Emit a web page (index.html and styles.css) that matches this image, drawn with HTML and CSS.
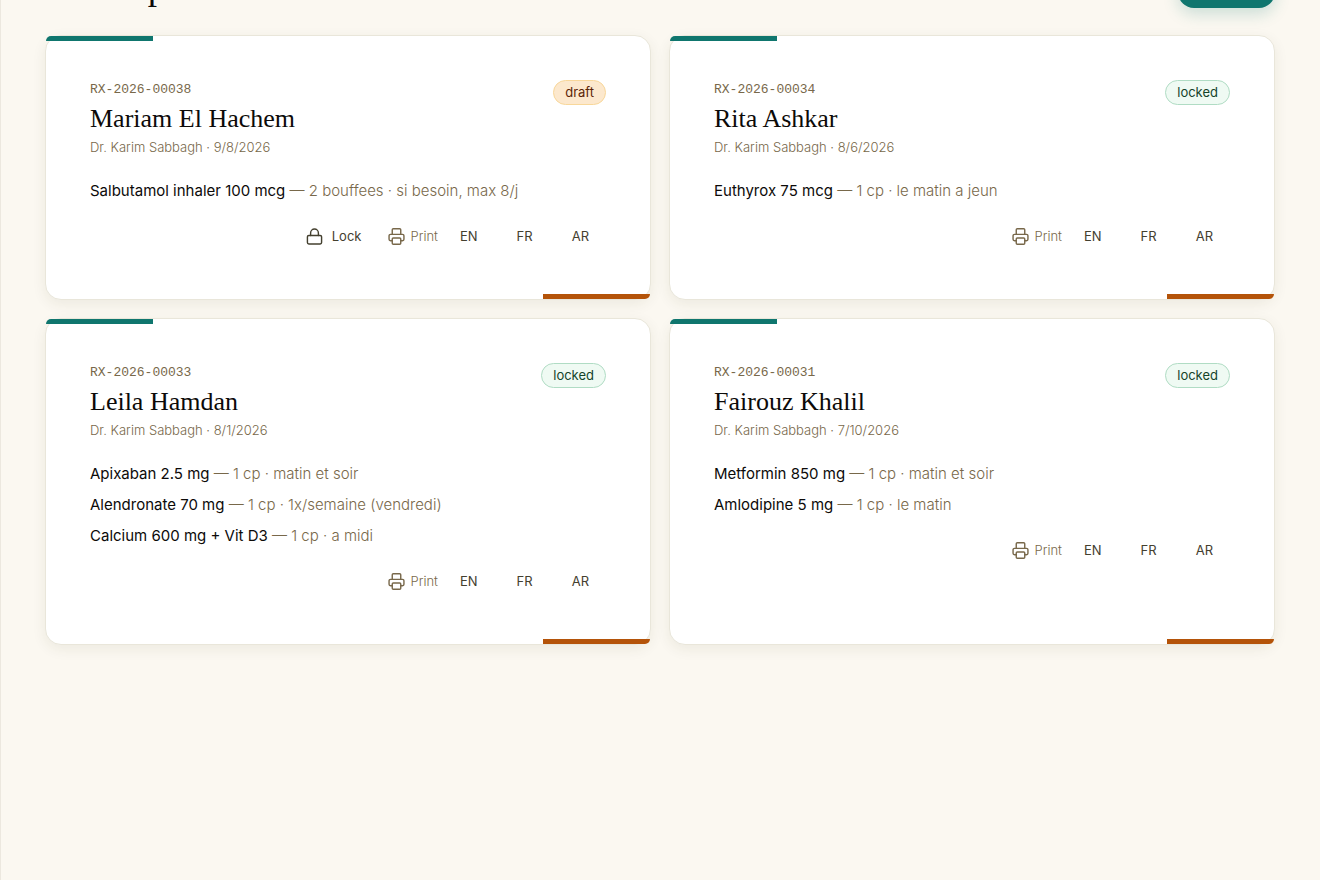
FILE: index.html
```html
<!DOCTYPE html>
<html lang="en">
<head>
    <meta charset="UTF-8">
    <meta name="viewport" content="width=device-width, initial-scale=1.0">
    <title>Prescriptions</title>
    <link rel="stylesheet" href="styles.css">
</head>
<body>
    <svg class="sprite" aria-hidden="true">
        <symbol id="icon-lock" viewBox="0 0 24 24">
            <rect x="2" y="10.5" width="20" height="12" rx="2"/>
            <path d="M6.5 10.5V7a5.5 5.5 0 0 1 11 0v3.5"/>
        </symbol>
        <symbol id="icon-print" viewBox="0 0 24 24">
            <path d="M6 9V2.5A1.5 1.5 0 0 1 7.5 1h9A1.5 1.5 0 0 1 18 2.5V9"/>
            <path d="M6 18H3.5a2 2 0 0 1-2-2v-5a2 2 0 0 1 2-2h17a2 2 0 0 1 2 2v5a2 2 0 0 1-2 2H18"/>
            <rect x="6" y="14" width="12" height="9" rx="1.5"/>
        </symbol>
    </svg>

    <main class="page">
        <header class="page-header">
            <h1>Prescriptions</h1>
            <button class="btn-new" type="button">New</button>
        </header>

        <div class="grid">
            <article class="card">
                <div class="card-head">
                    <div>
                        <div class="number">RX-2026-00038</div>
                        <h2>Mariam El Hachem</h2>
                        <p class="meta">Dr. Karim Sabbagh · 9/8/2026</p>
                    </div>
                    <span class="badge draft">draft</span>
                </div>
                <ul class="items">
                    <li><strong>Salbutamol inhaler 100 mcg</strong> — 2 bouffees · si besoin, max 8/j</li>
                </ul>
                <div class="actions">
                    <button type="button"><svg><use href="#icon-lock"/></svg>Lock</button>
                    <span class="print"><svg><use href="#icon-print"/></svg>Print</span>
                    <button type="button">EN</button>
                    <button type="button">FR</button>
                    <button type="button">AR</button>
                </div>
            </article>

            <article class="card">
                <div class="card-head">
                    <div>
                        <div class="number">RX-2026-00034</div>
                        <h2>Rita Ashkar</h2>
                        <p class="meta">Dr. Karim Sabbagh · 8/6/2026</p>
                    </div>
                    <span class="badge locked">locked</span>
                </div>
                <ul class="items">
                    <li><strong>Euthyrox 75 mcg</strong> — 1 cp · le matin a jeun</li>
                </ul>
                <div class="actions">
                    <span class="print"><svg><use href="#icon-print"/></svg>Print</span>
                    <button type="button">EN</button>
                    <button type="button">FR</button>
                    <button type="button">AR</button>
                </div>
            </article>

            <article class="card">
                <div class="card-head">
                    <div>
                        <div class="number">RX-2026-00033</div>
                        <h2>Leila Hamdan</h2>
                        <p class="meta">Dr. Karim Sabbagh · 8/1/2026</p>
                    </div>
                    <span class="badge locked">locked</span>
                </div>
                <ul class="items">
                    <li><strong>Apixaban 2.5 mg</strong> — 1 cp · matin et soir</li>
                    <li><strong>Alendronate 70 mg</strong> — 1 cp · 1x/semaine (vendredi)</li>
                    <li><strong>Calcium 600 mg + Vit D3</strong> — 1 cp · a midi</li>
                </ul>
                <div class="actions">
                    <span class="print"><svg><use href="#icon-print"/></svg>Print</span>
                    <button type="button">EN</button>
                    <button type="button">FR</button>
                    <button type="button">AR</button>
                </div>
            </article>

            <article class="card">
                <div class="card-head">
                    <div>
                        <div class="number">RX-2026-00031</div>
                        <h2>Fairouz Khalil</h2>
                        <p class="meta">Dr. Karim Sabbagh · 7/10/2026</p>
                    </div>
                    <span class="badge locked">locked</span>
                </div>
                <ul class="items">
                    <li><strong>Metformin 850 mg</strong> — 1 cp · matin et soir</li>
                    <li><strong>Amlodipine 5 mg</strong> — 1 cp · le matin</li>
                </ul>
                <div class="actions">
                    <span class="print"><svg><use href="#icon-print"/></svg>Print</span>
                    <button type="button">EN</button>
                    <button type="button">FR</button>
                    <button type="button">AR</button>
                </div>
            </article>
        </div>
    </main>
</body>
</html>
```
FILE: styles.css
```css
* {
    box-sizing: border-box;
}
body {
    margin: 0;
    background-color: #fbf8f1;
    color: #0c0a09;
    font-family: Inter, "Liberation Sans", sans-serif;
    font-size: 15px;
    font-weight: 300;
}
h1, h2, p, ul {
    margin: 0;
    padding: 0;
}
.sprite {
    display: none;
}
.page {
    min-height: 100vh;
    padding: 0 45px 45px 44px;
    border-left: 1px solid #ece8df;
    overflow: hidden;
}
/* the title row is scrolled almost out of view */
.page-header {
    display: flex;
    justify-content: space-between;
    align-items: flex-end;
    height: 48px;
    margin: -40px 0 27px;
}
h1 {
    font-family: "Liberation Serif", serif;
    font-size: 37px;
    font-weight: 400;
    line-height: 42px;
}
.btn-new {
    width: 97px;
    height: 44px;
    border: none;
    border-radius: 16px;
    background-color: #0f766e;
    color: #fff;
    font: 500 13px Inter, "Liberation Sans", sans-serif;
    box-shadow: 0 6px 16px rgba(15, 118, 110, 0.2);
}
.grid {
    display: grid;
    grid-template-columns: 1fr 1fr;
    gap: 18px;
}
.card {
    position: relative;
    padding: 44px;
    border: 1px solid #e9e6da;
    border-radius: 16px;
    background-color: #fff;
    box-shadow: 0 4px 14px rgba(70, 60, 30, 0.08);
}
.card::before,
.card::after {
    content: "";
    position: absolute;
    width: 107px;
    height: 5px;
}
.card::before {
    top: 0;
    left: 0;
    border-top-left-radius: 5px;
    background-color: #0f766e;
}
.card::after {
    right: 0;
    bottom: 0;
    border-bottom-right-radius: 5px;
    background-color: #b45309;
}
.card-head {
    display: flex;
    justify-content: space-between;
    align-items: flex-start;
    margin-bottom: 23px;
}
.number {
    color: #78684a;
    font-family: "Liberation Mono", monospace;
    font-size: 13px;
    font-weight: 400;
    line-height: 20px;
}
h2 {
    font-family: "Liberation Serif", serif;
    font-size: 26px;
    font-weight: 400;
    line-height: 38px;
}
.meta {
    color: #78684a;
    font-size: 13px;
    line-height: 18px;
}
.badge {
    padding: 0 11px;
    border: 1px solid;
    border-radius: 13px;
    font-size: 13px;
    font-weight: 400;
    line-height: 23px;
}
.draft {
    border-color: #f8d79a;
    background-color: #fce8cd;
    color: #5c2507;
}
.locked {
    border-color: #b0dcc4;
    background-color: #effaf3;
    color: #14432a;
}
.items {
    display: grid;
    gap: 7px;
    margin-bottom: 14px;
    color: #78684a;
    line-height: 24px;
    list-style: none;
}
.items strong {
    color: #0c0a09;
    font-weight: 400;
}
.actions {
    display: flex;
    justify-content: flex-end;
    align-items: center;
    gap: 5px;
}
.actions button {
    display: flex;
    align-items: center;
    gap: 9px;
    height: 38px;
    padding: 0 17px;
    border: none;
    border-radius: 12px;
    background: none;
    color: #44402f;
    font: 400 13px Inter, "Liberation Sans", sans-serif;
    cursor: pointer;
}
.actions button:hover {
    background-color: #f5f1e6;
}
.actions svg {
    width: 17px;
    height: 17px;
    fill: none;
    stroke: currentColor;
    stroke-width: 2;
    stroke-linecap: round;
    stroke-linejoin: round;
}
.print {
    display: flex;
    align-items: center;
    gap: 5px;
    margin-left: 5px;
    color: #78684a;
    font-size: 13px;
}
```
